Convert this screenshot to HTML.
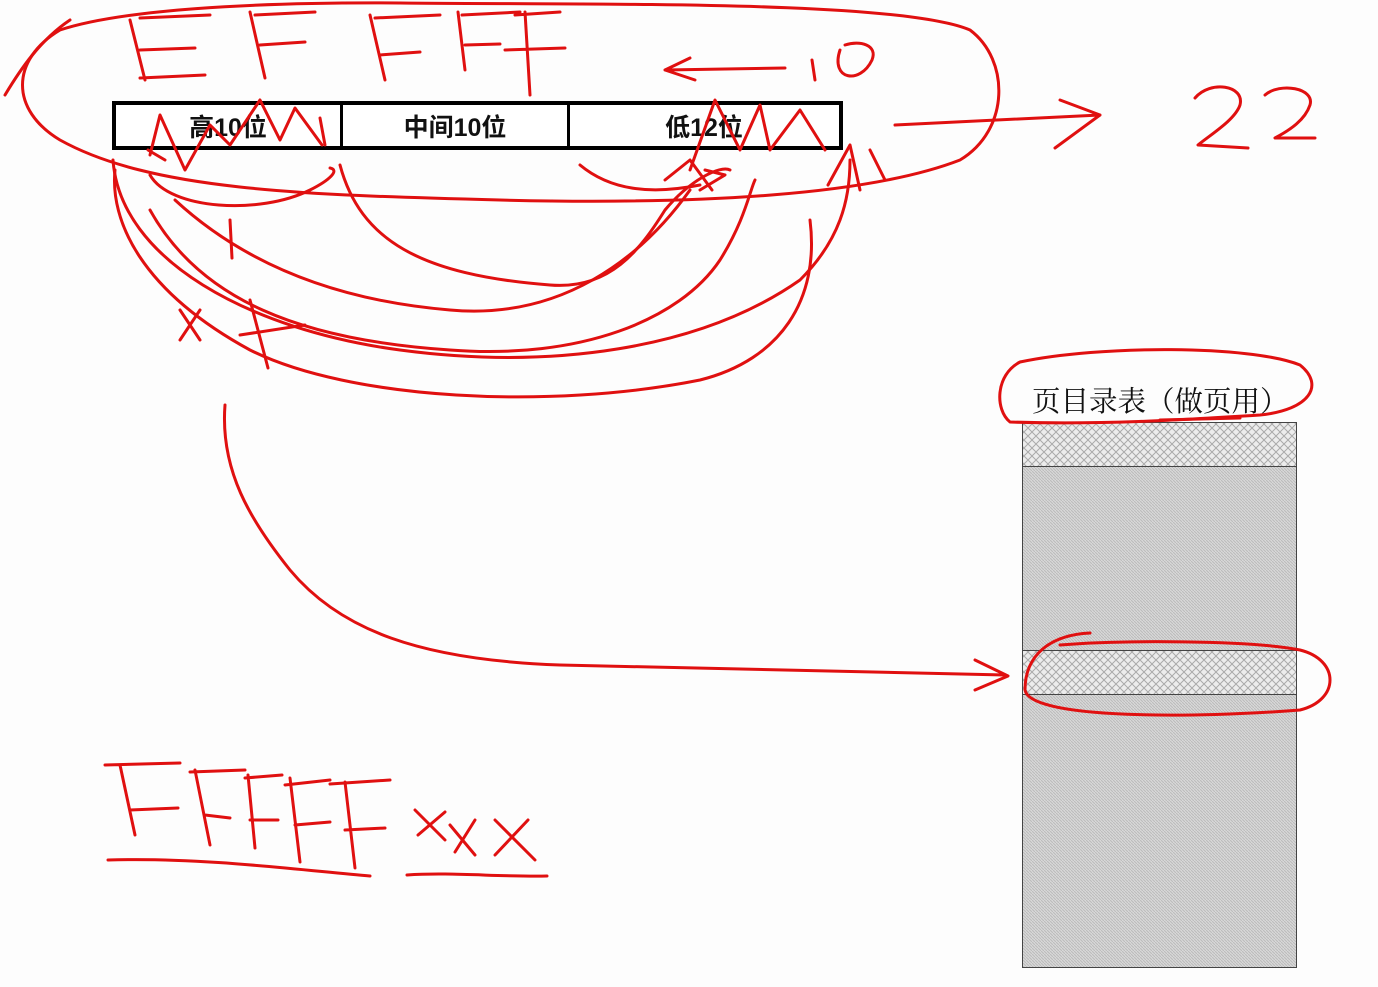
<!DOCTYPE html>
<html><head><meta charset="utf-8"><style>
html,body{margin:0;padding:0;background:#fdfdfd;}
body{width:1378px;height:987px;position:relative;overflow:hidden;font-family:"Liberation Sans","Noto Sans CJK SC",sans-serif;}
.t{position:absolute;left:112px;top:101px;width:731px;height:49px;border:4px solid #000;box-sizing:border-box;display:flex;background:#fff}
.t div{flex:none;height:100%;display:flex;align-items:center;justify-content:center;font-size:25px;font-weight:bold;color:#111;box-sizing:border-box}
.lbl{position:absolute;left:1032px;top:379px;font-size:28.5px;color:#111;font-family:"Liberation Serif","Noto Serif CJK SC",serif;}
</style></head><body>
<div class="t"><div style="width:227px;border-right:3px solid #000">高10位</div><div style="width:227px;border-right:3px solid #000">中间10位</div><div style="width:268px">低12位</div></div>
<div class="lbl">页目录表（做页用）</div>
<svg width="1378" height="987" style="position:absolute;left:0;top:0">
<defs>
<pattern id="h1" width="8" height="8" patternUnits="userSpaceOnUse"><rect width="8" height="8" fill="#ececec"/><path d="M0 0L8 8M8 0L0 8" stroke="#aaa" stroke-width="1"/></pattern>
<pattern id="h2" width="3" height="3" patternUnits="userSpaceOnUse"><rect width="3" height="3" fill="#d8d8d8"/><path d="M0 0L3 3" stroke="#bbb" stroke-width="1"/></pattern>
</defs>
<rect x="1022.5" y="422.5" width="274" height="545" fill="url(#h2)" stroke="#444"/>
<rect x="1022.5" y="422.5" width="274" height="44" fill="url(#h1)" stroke="#444"/>
<rect x="1022.5" y="650.5" width="274" height="44" fill="url(#h1)" stroke="#444"/>
<g fill="none" stroke="#e01010" stroke-width="3" stroke-linecap="round" stroke-linejoin="round">
<path d="M60 30C10 60 10 110 60 140C150 190 300 195 500 200C700 205 870 195 960 160C1010 130 1010 60 970 30C900 0 600 5 400 3C250 2 120 10 60 30"/>
<path d="M5 95C20 70 40 40 70 20"/>
<path d="M130 20L145 80M140 18L210 15M140 50L195 48M140 78L205 75"/>
<path d="M250 12L265 78M255 15L315 12M260 45L305 42"/>
<path d="M370 15L385 80M375 18L440 15M380 55L420 52"/>
<path d="M458 12L465 70M462 15L520 12M465 45L500 44"/>
<path d="M525 12L530 95M515 15L560 12M505 50L565 48"/>
<path d="M665 70L785 68M690 58L665 70L695 80"/>
<path d="M812 60L815 80M840 50C830 80 860 85 872 60C878 45 860 40 845 45"/>
<path d="M895 125L1100 115M1060 100L1100 115L1055 148"/>
<path d="M1195 98C1210 80 1245 85 1240 105C1235 120 1210 135 1198 145L1248 148"/>
<path d="M1265 95C1280 82 1315 88 1310 105C1305 120 1290 130 1275 138L1315 138"/>
<path d="M150 155L160 115L185 170L210 125L230 145L260 100L280 140L295 108L322 145"/>
<path d="M148 150L165 160M320 118L325 145"/>
<path d="M690 170L715 100L740 150L760 105L770 150L800 110L825 150"/>
<path d="M665 180L690 160L712 190M705 170L725 175L700 190"/>
<path d="M828 185L850 145L860 190M870 150L885 180"/>
<path d="M113 160C120 260 250 330 400 350C550 370 700 350 800 280C840 240 850 200 850 160"/>
<path d="M150 210C200 300 300 340 450 350C580 360 680 320 720 260C745 220 750 190 755 180"/>
<path d="M175 200C240 260 330 300 450 310C560 320 640 260 690 190"/>
<path d="M340 165C360 240 420 275 550 285C610 290 640 250 665 210C690 180 720 165 730 170"/>
<path d="M115 170C110 220 140 290 250 350C350 400 550 410 700 380C780 360 820 300 810 220"/>
<path d="M580 165C610 190 650 195 700 185"/>
<path d="M150 175C170 210 260 215 310 190C330 180 340 170 330 168"/>
<path d="M230 220L232 258"/>
<path d="M180 310L200 340M200 310L180 340M250 300L268 368M240 335L305 325"/>
<path d="M225 405C220 470 250 520 290 570C340 630 420 660 560 665C750 670 880 672 1005 675M975 660L1008 676L975 690"/>
<path d="M1020 362C1100 345 1250 345 1300 365C1325 385 1310 410 1260 415C1180 420 1100 425 1010 422C995 410 995 375 1020 362"/>
<path d="M1160 420L1240 418"/>
<path d="M1090 633C1050 635 1025 655 1025 690C1030 720 1200 718 1300 710C1340 700 1340 660 1300 650C1250 640 1120 640 1060 645"/>
<path d="M120 765L135 835M105 765L180 763M130 810L178 808"/>
<path d="M195 770L210 845M190 772L245 770M205 815L230 818"/>
<path d="M248 775L255 848M245 778L282 775M250 820L278 820"/>
<path d="M290 778L300 862M285 785L330 780M295 825L330 822"/>
<path d="M345 782L355 868M330 784L390 780M345 830L385 828"/>
<path d="M415 810L445 840M445 812L418 835M450 825L475 855M475 820L455 852M495 820L535 860M528 820L495 855"/>
<path d="M108 860C200 857 300 870 370 876M407 875C450 872 500 877 547 876"/>
</g>
</svg>
</body></html>
